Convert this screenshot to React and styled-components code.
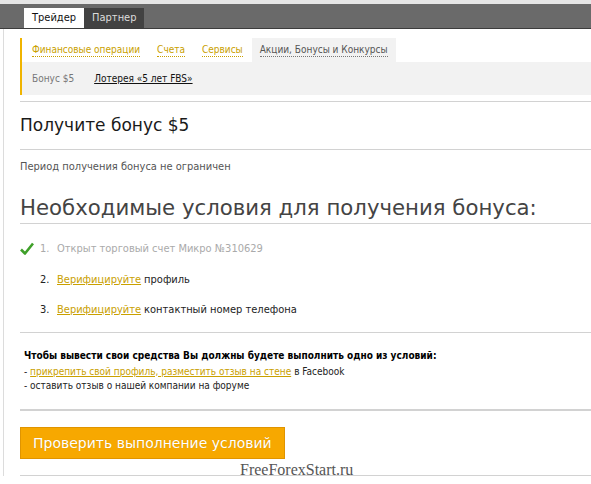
import React from 'react';
import styled, { createGlobalStyle } from 'styled-components';

const GlobalStyle = createGlobalStyle`
	body {
		margin: 0;
		background: #FFFFFF;
		font-family: Tahoma, "DejaVu Sans Condensed", "DejaVu Sans", sans-serif;
	}
`;

const Page = styled.div`
	width: 591px;
	height: 484px;
	overflow: hidden;
	position: relative;
`;

const TopBar = styled.div`
	border-top: 4px solid #E6E6E6;
	background: #6A6A6A;
	height: 20px;
	padding: 4px 0 0 24px;
	border-bottom: 1px solid #3C3C3C;
	display: flex;
	align-items: flex-end;
`;

const TopTab = styled.div`
	height: 20px;
	line-height: 20px;
	padding: 0 8px;
	font-size: 11px;
	background: ${(p) => (p.active ? '#FFFFFF' : '#424242')};
	color: ${(p) => (p.active ? '#111111' : '#DDDDDD')};
`;

const Frame = styled.div`
	margin-left: 3px;
	border-left: 1px solid #DCDCDC;
	padding-left: 16px;
	padding-top: 9px;
`;

const Menu = styled.div`
	border-left: 2px solid #F0B400;
`;

const MenuRow = styled.div`
	display: flex;
	height: 24px;
	align-items: stretch;
	padding-left: 2px;
`;

const MenuItem = styled.div`
	padding: 0 8px;
	margin-right: 1px;
	display: flex;
	align-items: center;
	font-size: 10px;
	background: ${(p) => (p.active ? '#F2F2F2' : 'transparent')};
	color: ${(p) => (p.active ? '#555555' : '#C9A000')};

	span {
		border-bottom: 1px dotted ${(p) => (p.active ? '#777777' : '#C9A000')};
		line-height: 12px;
	}
`;

const SubRow = styled.div`
	height: 33px;
	background: #F2F2F2;
	display: flex;
	align-items: center;
	padding-left: 10px;
	gap: 20px;
	font-size: 10px;
	color: #777777;
`;

const SubLink = styled.a`
	color: #111111;
	text-decoration: underline;
`;

const Divider = styled.div`
	height: ${(p) => p.thick || 1}px;
	background: #D2D2D2;
	margin-top: ${(p) => p.top || 0}px;
`;

const Title = styled.h2`
	margin: 0;
	height: 47px;
	line-height: 47px;
	font-family: "DejaVu Sans", sans-serif;
	font-weight: normal;
	font-size: 17px;
	color: #1A1A1A;
`;

const Note = styled.div`
	font-size: 11px;
	color: #555555;
	padding-top: 10px;
	line-height: 14px;
`;

const BigTitle = styled.h1`
	margin: 19px 0 0;
	font-family: "DejaVu Sans", sans-serif;
	font-weight: normal;
	font-size: 21.25px;
	line-height: 30px;
	color: #444444;
	border-bottom: 1px solid #D2D2D2;
`;

const Steps = styled.div`
	padding: 8px 0 8px;
`;

const Step = styled.div`
	display: flex;
	align-items: center;
	height: ${(p) => p.h || 30}px;
	font-size: 11px;
	color: ${(p) => (p.done ? '#AAAAAA' : '#222222')};
`;

const Check = styled.div`
	width: 20px;
	display: flex;
	align-items: center;
`;

const Num = styled.span`
	width: 17px;
`;

const YellowLink = styled.a`
	color: #C9A000;
	text-decoration: underline;
	margin-right: 3px;
`;

const Conditions = styled.div`
	padding: 16px 0 15px 4px;
	font-size: 10px;
	line-height: 14.5px;
	color: #222222;
`;

const Strong = styled.div`
	font-weight: bold;
	color: #000000;
	margin-bottom: 1px;
`;

const Button = styled.button`
	display: block;
	margin-top: 16px;
	height: 32px;
	padding: 0 12px;
	background: #F7A800;
	border: 1px solid #E09400;
	color: #FFFFFF;
	font-family: "DejaVu Sans", sans-serif;
	font-size: 14px;
	text-shadow: 0 0 1px rgba(0, 0, 0, 0.15);
	cursor: pointer;
`;

const Watermark = styled.div`
	position: absolute;
	left: 240px;
	top: 461px;
	font-family: "Liberation Serif", serif;
	font-size: 16px;
	color: #555555;
`;

const steps = [
	{ text: 'Открыт торговый счет Микро №310629', done: true },
	{ link: 'Верифицируйте', text: 'профиль' },
	{ link: 'Верифицируйте', text: 'контактный номер телефона' },
];

const App = () => (
	<Page>
		<GlobalStyle />
		<TopBar>
			<TopTab active>Трейдер</TopTab>
			<TopTab>Партнер</TopTab>
		</TopBar>
		<Frame>
			<Menu>
				<MenuRow>
					<MenuItem><span>Финансовые операции</span></MenuItem>
					<MenuItem><span>Счета</span></MenuItem>
					<MenuItem><span>Сервисы</span></MenuItem>
					<MenuItem active><span>Акции, Бонусы и Конкурсы</span></MenuItem>
				</MenuRow>
				<SubRow>
					<span>Бонус $5</span>
					<SubLink>Лотерея «5 лет FBS»</SubLink>
				</SubRow>
			</Menu>
			<Divider top={6} />
			<Title>Получите бонус $5</Title>
			<Divider />
			<Note>Период получения бонуса не ограничен</Note>
			<BigTitle>Необходимые условия для получения бонуса:</BigTitle>
			<Steps>
				{steps.map((s, i) => (
					<Step key={i} done={s.done} h={i === 0 ? 32 : 30}>
						<Check>
							{s.done && (
								<svg width="14" height="13" viewBox="0 0 14 13">
									<path d="M1 7.5 L5 11.5 L13 1.5" fill="none" stroke="#3FA02A" strokeWidth="2.6" strokeLinejoin="round" />
								</svg>
							)}
						</Check>
						<Num>{i + 1}.</Num>
						{s.link && <YellowLink>{s.link}</YellowLink>}
						{s.text}
					</Step>
				))}
			</Steps>
			<Divider />
			<Conditions>
				<Strong>Чтобы вывести свои средства Вы должны будете выполнить одно из условий:</Strong>
				<div>- <YellowLink>прикрепить свой профиль, разместить отзыв на стене</YellowLink>в Facebook</div>
				<div>- оставить отзыв о нашей компании на форуме</div>
			</Conditions>
			<Divider thick={2} />
			<Button>Проверить выполнение условий</Button>
			<Divider top={16} />
		</Frame>
		<Watermark>FreeForexStart.ru</Watermark>
	</Page>
);

export default App;
